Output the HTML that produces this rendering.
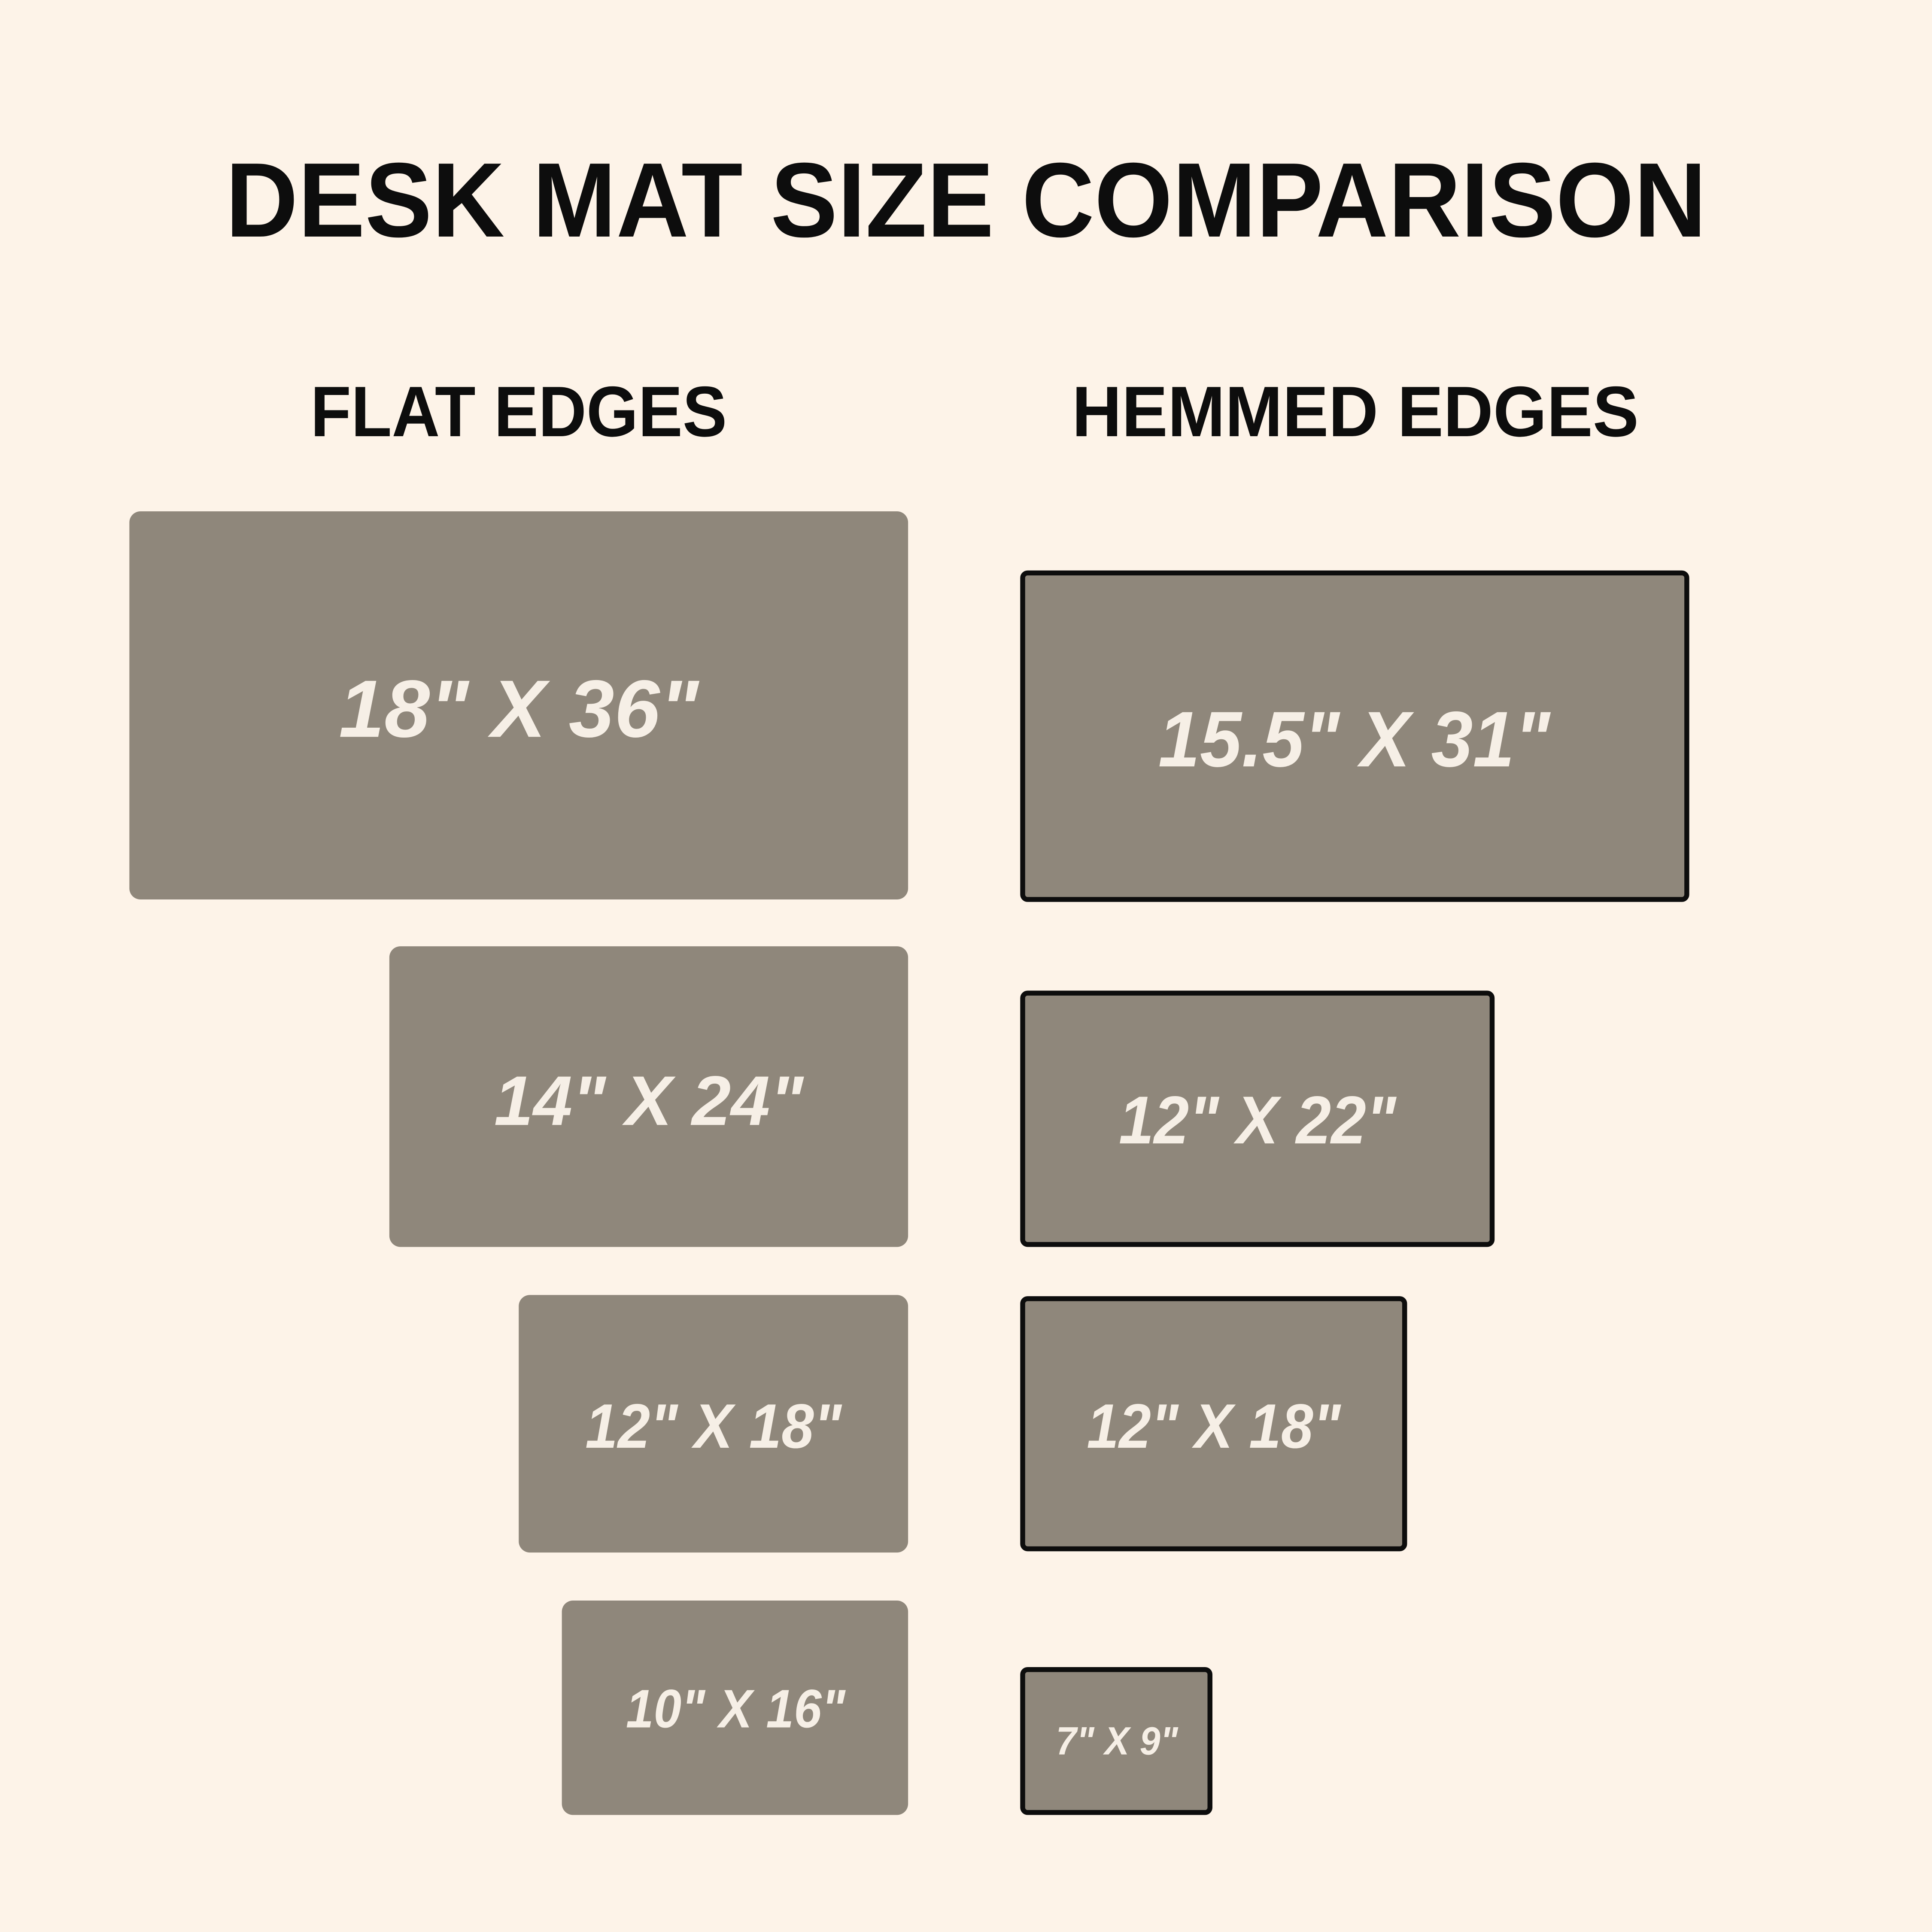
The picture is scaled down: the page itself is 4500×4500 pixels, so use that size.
<!DOCTYPE html>
<html><head><meta charset="utf-8">
<style>
html,body{margin:0;padding:0;background:#fdf3e8;}
svg{display:block;}
</style></head>
<body>
<svg xmlns="http://www.w3.org/2000/svg" width="4500" height="4500" viewBox="0 0 1568 1568">
<rect width="1568" height="1568" fill="#fdf3e8"/>
<g font-family="Liberation Sans, sans-serif" font-weight="bold" fill="#0d0d0d">
<text x="183" y="192" font-size="86" textLength="1202" lengthAdjust="spacingAndGlyphs">DESK MAT SIZE COMPARISON</text>
<text x="252" y="354" font-size="58" textLength="338" lengthAdjust="spacingAndGlyphs">FLAT EDGES</text>
<text x="870" y="354" font-size="58" textLength="460" lengthAdjust="spacingAndGlyphs">HEMMED EDGES</text>
</g>
<g fill="#8f877b">
<rect x="105" y="415" width="632" height="315" rx="9"/>
<rect x="316" y="768" width="421" height="244" rx="9"/>
<rect x="421" y="1051" width="316" height="209" rx="9"/>
<rect x="456" y="1299" width="281" height="174" rx="9"/>
</g>
<g fill="#8f877b" stroke="#0d0d0d" stroke-width="4">
<rect x="830" y="465" width="539" height="265" rx="4"/>
<rect x="830" y="806" width="381" height="204" rx="4"/>
<rect x="830" y="1054" width="310" height="203" rx="4"/>
<rect x="830" y="1355" width="152" height="116" rx="4"/>
</g>
<g font-family="Liberation Sans, sans-serif" font-weight="bold" font-style="italic" fill="#f6efe6">
<text x="275" y="598" font-size="66" textLength="292" lengthAdjust="spacingAndGlyphs">18" X 36"</text>
<text x="401" y="913" font-size="57" textLength="251" lengthAdjust="spacingAndGlyphs">14" X 24"</text>
<text x="475" y="1175" font-size="51" textLength="208" lengthAdjust="spacingAndGlyphs">12" X 18"</text>
<text x="508" y="1402" font-size="44" textLength="178" lengthAdjust="spacingAndGlyphs">10" X 16"</text>
<text x="940" y="622" font-size="64" textLength="318" lengthAdjust="spacingAndGlyphs">15.5" X 31"</text>
<text x="908" y="928" font-size="55" textLength="225" lengthAdjust="spacingAndGlyphs">12" X 22"</text>
<text x="882" y="1175" font-size="51" textLength="206" lengthAdjust="spacingAndGlyphs">12" X 18"</text>
<text x="857" y="1424" font-size="32" textLength="99" lengthAdjust="spacingAndGlyphs">7" X 9"</text>
</g>
</svg>
</body></html>
